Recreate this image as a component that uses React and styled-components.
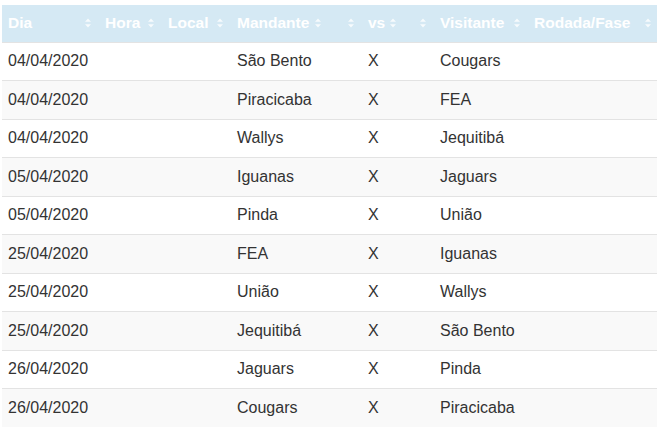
import React from "react";
import styled, { createGlobalStyle } from "styled-components";

const GlobalStyle = createGlobalStyle`
  body {
    margin: 0;
    background: #fff;
    font-family: "Liberation Sans", Arial, sans-serif;
  }
`;

const Wrapper = styled.div`
  padding: 5px 3px 0 2px;
`;

const Table = styled.table`
  width: 655px;
  border-collapse: collapse;
  table-layout: fixed;
  font-size: 16px;
  color: #333;
`;

const HeadRow = styled.tr`
  background-color: #d5e9f4;
  height: 37px;
`;

const Th = styled.th`
  padding: 0;
  font-weight: bold;
  font-size: 15.5px;
  color: #fff;
  text-align: left;
`;

const ThInner = styled.div`
  display: flex;
  align-items: center;
  justify-content: space-between;
  gap: 2px;
  padding: 0 6px 0 ${(p) => (p.$first ? 6 : 8)}px;
  white-space: nowrap;
`;

const Row = styled.tr`
  height: 38.5px;
  background-color: ${(p) => (p.$striped ? "#f9f9f9" : "#fff")};
  border-top: 1px solid #e3e3e3;
`;

const Td = styled.td`
  padding: 0 8px;
  white-space: nowrap;

  &:first-child {
    padding-left: 6px;
  }
`;

const SortIcon = () => (
  <svg width="6" height="10" viewBox="0 0 6 10" style={{ flexShrink: 0 }}>
    <path d="M3 0.5 L6 3.8 L0 3.8 Z" fill="rgba(255,255,255,0.8)" />
    <path d="M3 9.5 L6 6.2 L0 6.2 Z" fill="rgba(255,255,255,0.8)" />
  </svg>
);

const colunas = [
  { label: "Dia", width: 95 },
  { label: "Hora", width: 63 },
  { label: "Local", width: 69 },
  { label: "Mandante", width: 98 },
  { label: "", width: 33 },
  { label: "vs", width: 42 },
  { label: "", width: 30 },
  { label: "Visitante", width: 94 },
  { label: "Rodada/Fase", width: 131 },
];

const jogos = [
  ["04/04/2020", "São Bento", "Cougars"],
  ["04/04/2020", "Piracicaba", "FEA"],
  ["04/04/2020", "Wallys", "Jequitibá"],
  ["05/04/2020", "Iguanas", "Jaguars"],
  ["05/04/2020", "Pinda", "União"],
  ["25/04/2020", "FEA", "Iguanas"],
  ["25/04/2020", "União", "Wallys"],
  ["25/04/2020", "Jequitibá", "São Bento"],
  ["26/04/2020", "Jaguars", "Pinda"],
  ["26/04/2020", "Cougars", "Piracicaba"],
];

const App = () => {
  return (
    <Wrapper>
      <GlobalStyle />
      <Table>
        <colgroup>
          {colunas.map((c, i) => (
            <col key={i} style={{ width: c.width }} />
          ))}
        </colgroup>
        <thead>
          <HeadRow>
            {colunas.map((c, i) => (
              <Th key={i}>
                <ThInner $first={i === 0}>
                  <span>{c.label}</span>
                  <SortIcon />
                </ThInner>
              </Th>
            ))}
          </HeadRow>
        </thead>
        <tbody>
          {jogos.map(([dia, mandante, visitante], index) => (
            <Row key={index} $striped={index % 2 === 1}>
              <Td>{dia}</Td>
              <Td />
              <Td />
              <Td>{mandante}</Td>
              <Td />
              <Td>X</Td>
              <Td />
              <Td>{visitante}</Td>
              <Td />
            </Row>
          ))}
        </tbody>
      </Table>
    </Wrapper>
  );
};

export default App;
